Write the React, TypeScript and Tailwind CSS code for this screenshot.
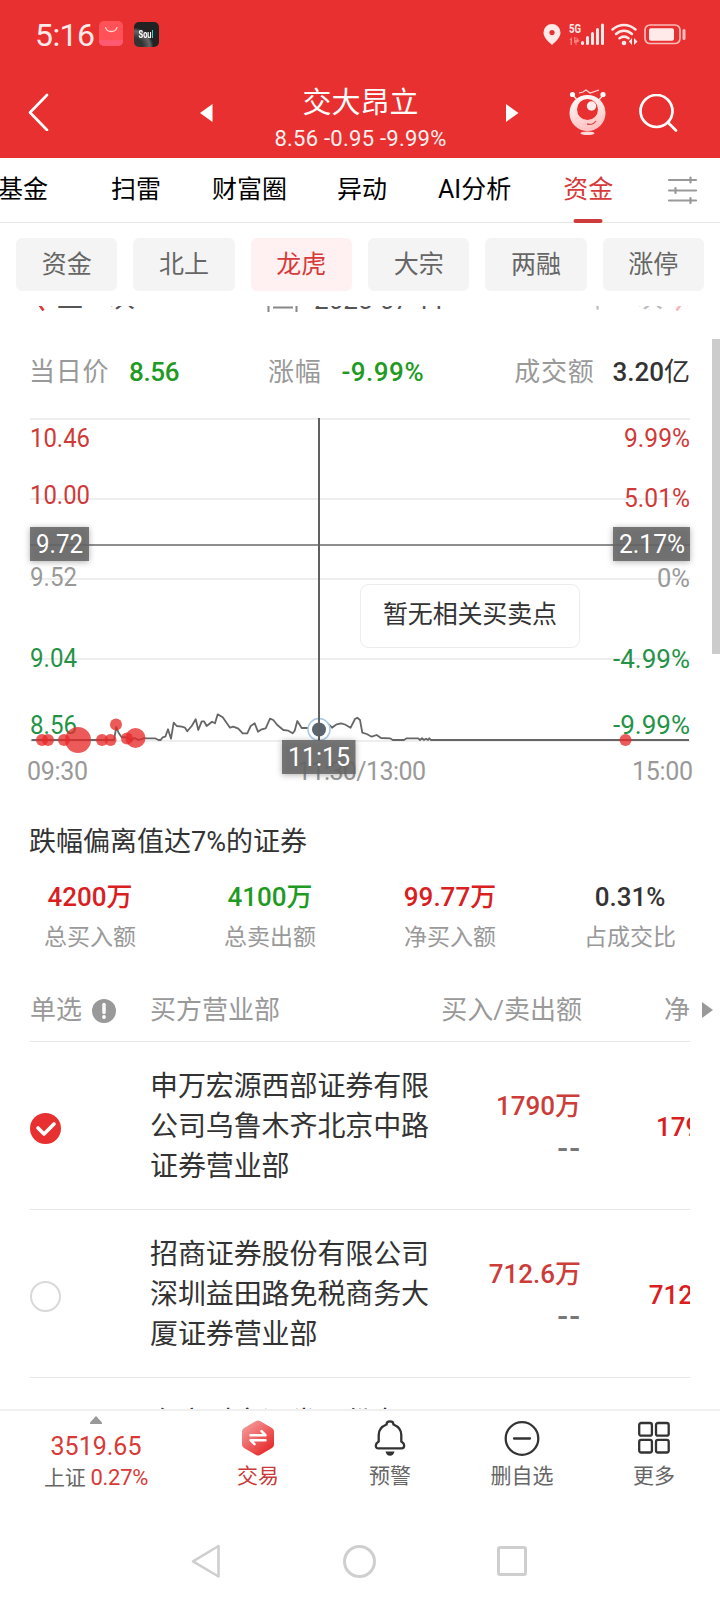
import clsx from "clsx";

const tabs = [
  { name: "基金", space: "-ml-0.5" },
  { name: "扫雷", space: "ml-[63px]" },
  { name: "财富圈", space: "ml-[51px]" },
  { name: "异动", space: "ml-[50px]" },
  { name: "AI分析", space: "ml-[51px]" },
  { name: "资金", space: "ml-[52px]", active: true },
];

const filters = ["资金", "北上", "龙虎", "大宗", "两融", "涨停"];

const summary = [
  { value: "4200万", label: "总买入额", color: "text-[#d9201f]" },
  { value: "4100万", label: "总卖出额", color: "text-[#1f9a22]" },
  { value: "99.77万", label: "净买入额", color: "text-[#d9201f]" },
  { value: "0.31%", label: "占成交比", color: "text-[#333]" },
];

const brokers = [
  { name: "申万宏源西部证券有限公司乌鲁木齐北京中路证券营业部", amount: "1790万", checked: true },
  { name: "招商证券股份有限公司深圳益田路免税商务大厦证券营业部", amount: "712.6万", checked: false },
  { name: "东方财富证券股份有限公司", amount: "", checked: false },
];

const axis = [
  { y: 438, left: "10.46", leftY: 438, right: "9.99%", color: "#cf3a38", lw: 60, rw: 66 },
  { y: 498, left: "10.00", leftY: 495, right: "5.01%", color: "#cf3a38", lw: 60, rw: 66 },
  { y: 578, left: "9.52", leftY: 577, right: "0%", color: "#999", lw: 47, rw: 33 },
  { y: 659, left: "9.04", leftY: 658, right: "-4.99%", color: "#249347", lw: 47, rw: 77 },
  { y: 725, left: "8.56", leftY: 725, right: "-9.99%", color: "#249347", lw: 47, rw: 77 },
];

// large orders: x, y, radius
const orders = [
  [42, 740, 6], [48, 740, 6], [64, 740, 6], [78, 740, 13], [102, 740, 6],
  [110.5, 740, 6], [116, 724.5, 6], [127, 738.5, 6], [135.5, 738, 10], [625.5, 740, 6],
];

const priceLine =
  "31.5,740 114,740 116.3,727 118.7,733 121.5,737 127,737.5 131.5,740 134.5,738 138.5,740 143.5,738.3 155,738.3 158.5,740 160.7,740 162.7,737.3 165.3,736.7 168,729.3 171,738.7 173.7,722.7 176.7,726 181.7,726.7 185,727.7 187.3,731.3 191.7,726 195.7,719.3 198.3,730 201.7,721.3 204,721.3 206.7,726 212,721.7 215,723.3 217.7,714.3 222.7,717.3 230,727.7 233.3,726.7 238.3,728.7 242.7,733.3 247.3,733.3 250.7,726 254.7,723.3 258,731.7 261.7,729.3 265.7,728.3 270,718.7 273.3,720 277.3,725 283.3,730 288.3,730.7 292.7,733.3 294.7,730.7 297.3,721 301.7,728 308.3,728 319,729 329,724.5 332,727.7 336.7,724.3 341,723.3 345,724.5 350.5,727.8 355,719 357.3,717.7 360,720 362.3,732.7 366.7,734 371.7,736.7 376.7,735 381,738 390,738.3 392.7,740 404,740 406.7,738.3 418.3,738.3 420,740 422,738.3 424,740 426,738.7 428,740 429.3,738.3 431,740 689,740";

function StatusBar() {
  return (
    <div className="flex h-[68px] items-center pl-[35px] pr-[34px] text-[#ffe9e9]">
      <span className="mt-0.5 w-[59px] text-[32px] leading-10 tracking-[-0.6px]">5:16</span>
      <svg className="ml-[5px]" width="24" height="26" viewBox="0 0 24 26">
        <rect width="24" height="25" rx="5" fill="#ff5258" />
        <path d="M0 19h24v1a5 5 0 0 1-5 5H5a5 5 0 0 1-5-5z" fill="#ff5a72" />
        <path d="M6.500 6c1 6 10.500 6 11.500 0" fill="none" stroke="#ffd9d0" strokeWidth="1.300" />
      </svg>
      <div className="ml-[11px] flex h-[25px] w-[25px] items-center justify-center overflow-hidden rounded-[5px] bg-[radial-gradient(circle_at_0%_100%,#333,#333_25%,#666_45%,#222_55%)] text-[10px] font-bold text-white">
        <span className="scale-x-75 scale-y-110">Sou<span className="text-[#2fd5cc]">l</span></span>
      </div>
      <svg className="ml-auto" width="143" height="28" viewBox="0 0 143 28" fill="currentColor">
        <path fillRule="evenodd" d="M9 4a8.500 8.500 0 0 0-8.500 8.500C.5 18 6 22 9 25c3-3 8.500-7 8.500-12.500A8.500 8.500 0 0 0 9 4zm0 6a2.600 2.600 0 1 1 0 5.200A2.600 2.600 0 0 1 9 10z" />
        <text x="26" y="13" fontSize="13" fontWeight="700" textLength="12" lengthAdjust="spacingAndGlyphs">5G</text>
        <g fill="#ff7c7c">
          <path d="M26 20l3-3v8h-1.500v-5zM31 17h1.500v3h1v-3l3 4-3 2v2h-1v-2H31z" />
        </g>
        <rect x="38" y="21" width="3" height="4" rx="1.500" />
        <rect x="43" y="16" width="3" height="9" rx="1.500" />
        <rect x="48" y="12" width="3" height="13" rx="1.500" />
        <rect x="53" y="8" width="3" height="17" rx="1.500" />
        <rect x="58" y="3.500" width="3" height="21.500" rx="1.500" />
        <g fill="none" stroke="currentColor" strokeWidth="2.500" strokeLinecap="round">
          <path d="M69.500 9.500c7-6 16-6 23 0M73 14c5-4.200 11-4.200 16 0M76.500 18.300c3-2.200 6-2.200 9 0" />
        </g>
        <circle cx="81" cy="23" r="2.300" />
        <path d="M89 18v7l-3.200-3.500zM91 18v7l3.500-3.500z" />
        <rect x="102" y="5" width="35" height="18.500" rx="5" fill="none" stroke="currentColor" strokeOpacity=".75" strokeWidth="1.700" />
        <rect x="106" y="8.300" width="25" height="12.500" rx="2" />
        <rect x="139.500" y="9" width="3" height="11" rx="1.500" opacity=".75" />
      </svg>
    </div>
  );
}

function TitleBar() {
  return (
    <div className="flex h-[90px] items-center px-7 text-white">
      <svg className="-mt-0.5" width="21" height="38" viewBox="0 0 21 38">
        <path d="M19 2L2 19.500 19 37" fill="none" stroke="currentColor" strokeWidth="2.600" strokeLinecap="round" strokeLinejoin="round" />
      </svg>
      <svg className="ml-[151px]" width="13" height="18" viewBox="0 0 13 18">
        <path d="M12.500 0v18L0 9z" fill="currentColor" />
      </svg>
      <div className="ml-[47px] flex w-[201px] flex-col items-center whitespace-nowrap pt-[13px]">
        <span className="text-[29px] leading-[38px]">交大昂立</span>
        <span className="text-[22px] leading-[34px] tracking-[0.25px] text-[#fff0f0]">8.56 -0.95 -9.99%</span>
      </div>
      <svg className="ml-[45px]" width="13" height="18" viewBox="0 0 13 18">
        <path d="M0 0v18l12.500-9z" fill="currentColor" />
      </svg>
      <svg className="-mt-0.5 ml-[50px]" width="38" height="48" viewBox="0 0 38 48">
        <defs>
          <linearGradient id="robot" x1="0" y1="0" x2=".3" y2="1">
            <stop offset="0" stopColor="#fff" />
            <stop offset="1" stopColor="#ffc3c3" />
          </linearGradient>
        </defs>
        <path d="M3 6l6 7M35 6l-6 7" stroke="#ffdcdc" strokeWidth="1.500" />
        <circle cx="3.500" cy="6.500" r="2.600" fill="#fff" />
        <circle cx="34" cy="6.500" r="2.600" fill="#fff" />
        <path d="M10 5l4-1 3-2 4 3 9-3" fill="none" stroke="#ffdcdc" strokeWidth="1.200" />
        <circle cx="18.500" cy="25" r="18" fill="url(#robot)" />
        <circle cx="18.500" cy="21.500" r="10.500" fill="#e93030" />
        <circle cx="22.500" cy="18" r="4.700" fill="#ffecec" />
        <path d="M18 36c4 1 7 0 9-3" fill="none" stroke="#d84a4a" strokeWidth="1.300" />
        <ellipse cx="18.500" cy="45.300" rx="7" ry="1.800" fill="#ffdcdc" />
      </svg>
      <svg className="ml-[32px]" width="39" height="39" viewBox="0 0 39 39" fill="none" stroke="currentColor" strokeWidth="2.700" strokeLinecap="round">
        <circle cx="17.500" cy="17" r="16" />
        <path d="M29 28.500l8 8" />
      </svg>
    </div>
  );
}

function Tabs() {
  return (
    <nav className="flex h-[65px] shrink-0 items-center whitespace-nowrap border-b border-[#e6e6e6] text-[25px] text-black">
      {tabs.map((t) => (
        <div
          key={t.name}
          className={clsx("relative flex h-full items-center", t.space, t.active && "text-[#d63a3a]")}
        >
          {t.name}
          {t.active && <i className="absolute -bottom-px left-1/2 h-1 w-[29px] -translate-x-1/2 rounded-sm bg-[#ce3b3b]" />}
        </div>
      ))}
      <svg className="ml-auto mr-[22px]" width="31" height="28" viewBox="0 0 31 28" fill="none" stroke="#999" strokeWidth="2.200" strokeLinecap="round">
        <path d="M2 4h27M2 14.500h27M2 24.500h27M23.500 1.500v5M8.500 12v5M23.500 22v5" />
      </svg>
    </nav>
  );
}

function DateRow() {
  return (
    <div className="-mt-[29px] flex h-10 items-center whitespace-nowrap text-[26px] text-[#555]">
      <svg className="ml-[32px]" width="13" height="28" viewBox="0 0 13 28">
        <path d="M12 1L2 14.500l9.500 13" fill="none" stroke="#d63a3a" strokeWidth="2.600" />
      </svg>
      <span className="ml-[12px] mt-0.5">上一次</span>
      <svg className="ml-[132px]" width="31" height="30" viewBox="0 0 31 30" fill="none" stroke="#888" strokeWidth="2">
        <path d="M1.500 4v28M29.500 4v28M1.500 4h28M6 25.500h20" />
      </svg>
      <span className="ml-[16px] mt-1.5">2025-07-11</span>
      <span className="ml-auto mt-0.5 text-[#bbb]">下一次</span>
      <svg className="ml-[12px] mr-[32px]" width="13" height="28" viewBox="0 0 13 28">
        <path d="M1 1l10 13.500L1.500 27.500" fill="none" stroke="#f3b5b5" strokeWidth="2.600" />
      </svg>
    </div>
  );
}

function Quote() {
  return (
    <div className="mt-[35px] flex h-10 items-center whitespace-nowrap px-[30px] pt-px text-[26px] text-[#999]">
      <span className="-ml-px tracking-[0.7px]">当日价</span>
      <b className="ml-5 font-medium tracking-[-0.4px] text-[#1f9a22]">8.56</b>
      <span className="ml-[89px] tracking-[0.7px]">涨幅</span>
      <b className="ml-5 font-medium tracking-[0.5px] text-[#1f9a22]">-9.99%</b>
      <span className="ml-auto tracking-[0.7px]">成交额</span>
      <b className="ml-[18px] font-medium text-[#333]">3.20<span className="font-normal">亿</span></b>
    </div>
  );
}

function Chart() {
  return (
    <svg className="mt-2 block" width="720" height="400" viewBox="0 400 720 400" fontSize="25">
      {[419, 499, 579, 659, 741].map((y) => (
        <path key={y} d={`M30 ${y}H690`} stroke="#eee" strokeWidth="2" />
      ))}
      <path d="M30 545H690" stroke="#8f8f8f" strokeWidth="2" />
      {axis.map((a) => (
        <g key={a.left} fill={a.color}>
          <text x="30" y={a.leftY + 9} textLength={a.lw} lengthAdjust="spacingAndGlyphs">{a.left}</text>
          <text x={690 - a.rw} y={a.y + 9} textLength={a.rw} lengthAdjust="spacingAndGlyphs">{a.right}</text>
        </g>
      ))}
      <g fill="#999">
        <text x="27" y="780" textLength="61">09:30</text>
        <text x="297" y="780" textLength="129">11:30/13:00</text>
        <text x="632" y="780" textLength="61">15:00</text>
      </g>
      <polyline points={priceLine} fill="none" stroke="#666" strokeWidth="1.800" strokeLinejoin="round" />
      {orders.map(([x, y, r]) => (
        <circle key={x} cx={x} cy={y} r={r} fill="#e62828" fillOpacity=".77" />
      ))}
      <circle cx="319" cy="729.500" r="11" fill="#fff" stroke="#a9c8e6" strokeWidth="1.500" />
      <circle cx="319" cy="729.500" r="7" fill="#596470" />
      <path d="M319 418V741" stroke="#606060" strokeWidth="2" />
      <g className="drop-shadow-[0_1px_3px_rgba(0,0,0,0.35)]" fill="#666" fillOpacity=".88">
        <rect x="30" y="527" width="59" height="34" />
        <rect x="613" y="527" width="77" height="34" />
        <rect x="282" y="740" width="73.500" height="34" />
      </g>
      <g fill="#fff">
        <text x="36" y="553" textLength="47" lengthAdjust="spacingAndGlyphs">9.72</text>
        <text x="619" y="553" textLength="66" lengthAdjust="spacingAndGlyphs">2.17%</text>
        <text x="288" y="766" textLength="62">11:15</text>
      </g>
      <rect x="360.500" y="584.500" width="219" height="63" rx="8" fill="#fff" stroke="#ececec" />
      <text x="383" y="623" textLength="174" fill="#333">暂无相关买卖点</text>
    </svg>
  );
}

function Summary() {
  return (
    <section>
      <h2 className="ml-[29px] mt-[22px] h-[39px] text-[27px] leading-10 text-[#333]">跌幅偏离值达7%的证券</h2>
      <div className="mt-4 grid grid-cols-4">
        {summary.map((s) => (
          <div key={s.label} className="text-center leading-10">
            <div className={clsx("text-[26px] font-medium", s.color)}>{s.value}</div>
            <div className="h-10 pt-px text-[23px] text-[#999]">{s.label}</div>
          </div>
        ))}
      </div>
    </section>
  );
}

function BrokerList() {
  return (
    <section className="mx-[30px] mt-5">
      <header className="flex h-[65px] items-center whitespace-nowrap border-b border-[#e8e8e8] pt-0.5 text-[26px] text-[#999]">
        <span>单选</span>
        <svg className="ml-[10px] mt-0.5" width="24" height="24" viewBox="0 0 24 24">
          <circle cx="12" cy="12" r="12" fill="#999" />
          <path d="M12 5.500v8" stroke="#fff" strokeWidth="3.500" strokeLinecap="round" />
          <circle cx="12" cy="18" r="1.900" fill="#fff" />
        </svg>
        <span className="ml-[34px]">买方营业部</span>
        <span className="ml-auto">买入/卖出额</span>
        <span className="ml-[82px]">净</span>
        <svg className="-mr-[23px] ml-[12px]" width="11" height="16" viewBox="0 0 11 16">
          <path d="M0 0v16l11-8z" fill="#999" />
        </svg>
      </header>
      {brokers.map((b) => (
        <div key={b.name} className="flex h-[168px] items-center overflow-hidden border-b border-[#e8e8e8]">
          {b.checked ? (
            <svg className="mt-1.5 shrink-0" width="31" height="31" viewBox="0 0 31 31">
              <circle cx="15.500" cy="15.500" r="15.500" fill="#e93030" />
              <path d="M8 15l6 6 10-10" fill="none" stroke="#fff" strokeWidth="3.600" strokeLinecap="round" strokeLinejoin="round" />
            </svg>
          ) : (
            <i className="mt-1.5 h-[31px] w-[31px] shrink-0 rounded-full border-2 border-[#d9d9d9]" />
          )}
          <p className="ml-[89px] mt-[3px] h-[120px] w-[281px] shrink-0 break-all text-[28px] leading-10 tracking-[-0.1px] text-[#333]">{b.name}</p>
          <div className="h-[86px] w-[150px] shrink-0 text-right leading-[42px] text-[#cc3d39]">
            <div className="mt-0.5 text-[26px] font-medium">{b.amount}</div>
            <div className="text-[32px] font-medium tracking-[1px] text-[#777]">{b.amount && "--"}</div>
          </div>
          <div className="mt-1 w-[160px] shrink-0 text-right text-[26px] font-medium text-[#d9201f]">{b.amount}</div>
        </div>
      ))}
    </section>
  );
}

function BottomBar() {
  return (
    <footer className="flex h-[101px] shrink-0 border-t-2 border-[#f0f0f0] text-[21px] text-[#666]">
      <div className="flex w-48 flex-col items-center text-[#d83a38]">
        <svg className="mt-[5px]" width="12" height="8" viewBox="0 0 12 8">
          <path d="M6 0l6 6.500V8H0V6.500z" fill="#999" />
        </svg>
        <span className="mt-2 text-[25px] leading-[30px]">3519.65</span>
        <span className="text-[22px] leading-[31px] tracking-[-0.3px]">
          <span className="text-[21px] text-[#666]">上证</span> 0.27%
        </span>
      </div>
      <div className="flex flex-1 flex-col items-center pt-[9px] leading-8 text-[#c93a38]">
        <svg width="34" height="36" viewBox="0 0 34 36">
          <defs>
            <linearGradient id="trade" x1="0" y1="0" x2=".8" y2="1">
              <stop offset="0" stopColor="#f6a8a8" />
              <stop offset="1" stopColor="#e62424" />
            </linearGradient>
          </defs>
          <path d="M17 .5q1 0 2 .6l12 6.900q2 1.200 2 3.200v13.600q0 2-2 3.200l-12 6.900q-2 1.200-4 0L3 28q-2-1.200-2-3.200V11.200Q1 9.200 3 8L15 1.100q1-.6 2-.6z" fill="url(#trade)" />
          <path d="M9.500 15.200h15l-4-4M24.500 20.200h-15l4 4" fill="none" stroke="#fff" strokeWidth="2.500" strokeLinecap="round" strokeLinejoin="round" />
        </svg>
        <span className="mt-1">交易</span>
      </div>
      <div className="flex flex-1 flex-col items-center pt-[9px] leading-8">
        <svg width="32" height="36" viewBox="0 0 32 36">
          <path d="M12.500 4.500C12.500 2.300 14 1.300 16 1.300s3.500 1 3.500 3.200c5 2 7.800 6 7.800 10.500v6.500c1.500 1 2.900 2 2.900 4 0 2-1 2.900-2.700 2.900h-23C2.800 28.400 1.800 27.500 1.800 25.500c0-2 1.400-3 2.900-4V15c0-4.500 2.800-8.500 7.800-10.500z" fill="none" stroke="#333" strokeWidth="2.300" />
          <path d="M11.500 31.500h9q-1 4.200-4.500 4.200t-4.500-4.200z" fill="#333" />
        </svg>
        <span className="mt-1">预警</span>
      </div>
      <div className="flex flex-1 flex-col items-center pt-[9px] leading-8">
        <svg width="36" height="36" viewBox="0 0 36 36" fill="none" stroke="#333" strokeWidth="2.300" strokeLinecap="round">
          <circle cx="18" cy="18.500" r="16.300" />
          <path d="M10 18.500h16" />
        </svg>
        <span className="mt-1">删自选</span>
      </div>
      <div className="flex flex-1 flex-col items-center pt-[9px] leading-8">
        <svg width="32" height="36" viewBox="0 0 32 36" fill="none" stroke="#333" strokeWidth="2.300">
          <rect x="1.200" y="3" width="12.700" height="12.700" rx="2" />
          <rect x="18" y="3" width="12.700" height="12.700" rx="2" />
          <rect x="1.200" y="19.800" width="12.700" height="12.700" rx="2" />
          <rect x="18" y="19.800" width="12.700" height="12.700" rx="2" />
        </svg>
        <span className="mt-1">更多</span>
      </div>
    </footer>
  );
}

function SystemNav() {
  return (
    <div className="flex h-[89px] items-center pl-[191px] pt-[13px]">
      <svg width="30" height="34" viewBox="0 0 30 34" fill="none" stroke="#cfcfcf" strokeWidth="2.600" strokeLinejoin="round">
        <path d="M27.500 2v30.500L2 17.300z" />
      </svg>
      <i className="ml-[122px] h-[33px] w-[33px] rounded-full border-[3px] border-[#cfcfcf]" />
      <i className="ml-[121px] h-[30px] w-[30px] rounded-[3px] border-[3px] border-[#cfcfcf]" />
    </div>
  );
}

export default function App() {
  return (
    <div className="flex h-[1600px] w-[720px] flex-col overflow-hidden bg-white font-[Roboto,'Noto_Sans_CJK_SC',sans-serif]">
      <div className="h-[158px] shrink-0 bg-[#e93030]">
        <StatusBar />
        <TitleBar />
      </div>
      <Tabs />
      <div className="mt-[15px] flex shrink-0 gap-4 px-4">
        {filters.map((f) => (
          <div
            key={f}
            className={clsx(
              "flex h-[53px] flex-1 items-center justify-center rounded-md text-[25px]",
              f === "龙虎" ? "bg-[#fff1f1] text-[#d63a3a]" : "bg-[#f4f4f4] text-[#666]"
            )}
          >
            {f}
          </div>
        ))}
      </div>
      <main className="relative mt-[15px] h-[1103px] shrink-0 overflow-hidden">
        <DateRow />
        <Quote />
        <Chart />
        <Summary />
        <BrokerList />
        <i className="absolute right-0 top-[33px] h-[315px] w-2 bg-[#ccc]" />
      </main>
      <BottomBar />
      <SystemNav />
    </div>
  );
}
